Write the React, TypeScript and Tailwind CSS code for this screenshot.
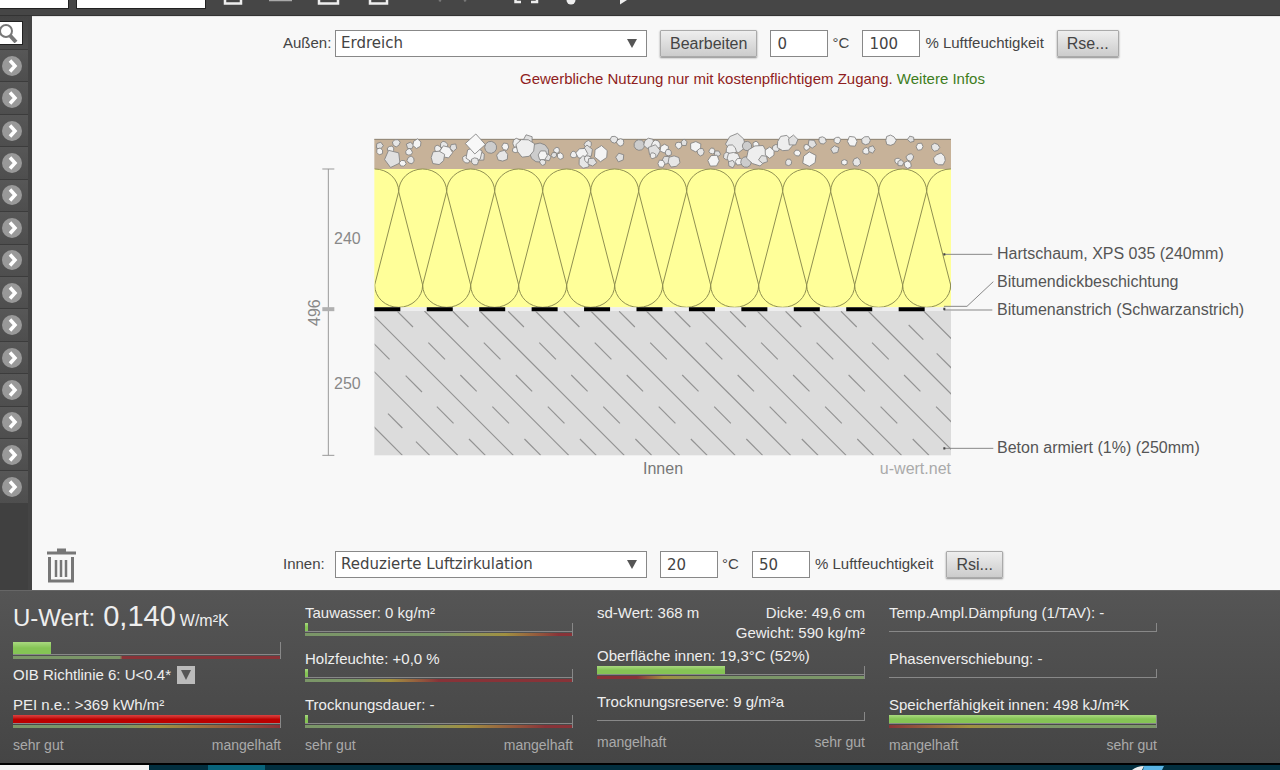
import React from "react";

type Stone = [x: number, y: number, r: number, shape?: "gem" | "grey"];

const STONES: Stone[] = [
  [239, 77, 10], [239, 94, 9], [289, 69, 10], [272, 88, 9], [277, 116, 23], [308, 130, 9], [332, 120, 10],
  [327, 96, 9], [330, 77, 10], [351, 71, 12], [432, 75, 10], [413, 86, 9], [460, 82, 10], [438, 96, 17],
  [413, 113, 19], [500, 117, 11], [540, 108, 14], [522, 104, 22], [525, 124, 10], [526, 72, 30, "gem"],
  [572, 82, 18, "grey"], [616, 80, 10], [607, 108, 15], [651, 69, 12], [684, 60, 14], [646, 90, 8],
  [718, 98, 29, "grey"], [676, 84, 25], [742, 112, 10], [728, 106, 13], [728, 127, 8], [770, 91, 8],
  [762, 105, 8], [781, 108, 9], [864, 73, 10], [821, 104, 9], [862, 94, 16], [845, 100, 15], [853, 126, 16],
  [863, 117, 9], [876, 126, 12], [903, 101, 20], [942, 59, 10], [961, 67, 10], [960, 112, 12],
  [1018, 75, 16, "grey"], [1047, 70, 14], [1068, 74, 12], [1062, 93, 17], [1093, 86, 12], [1105, 98, 9],
  [1059, 107, 8], [1099, 120, 12], [1084, 131, 10], [1122, 124, 16], [1136, 76, 9], [1152, 68, 9],
  [1187, 80, 15], [1202, 96, 10], [1236, 93, 8], [1252, 101, 9], [1241, 122, 16], [1308, 70, 26],
  [1293, 90, 14], [1341, 78, 14, "grey"], [1368, 74, 9], [1281, 108, 10], [1300, 115, 17], [1295, 132, 10],
  [1317, 125, 10], [1338, 126, 16, "grey"], [1372, 106, 28], [1390, 118, 12], [1409, 98, 14], [1428, 84, 10],
  [1454, 70, 21], [1479, 62, 14], [1492, 99, 9], [1466, 127, 9], [1520, 82, 8], [1536, 71, 12],
  [1528, 118, 19], [1567, 61, 10], [1612, 61, 9], [1605, 89, 11], [1657, 64, 14], [1698, 62, 12],
  [1698, 93, 9], [1715, 88, 10], [1633, 127, 8], [1670, 126, 11], [1772, 61, 14], [1833, 58, 9],
  [1859, 80, 10], [1906, 82, 11], [1793, 123, 8], [1802, 129, 9], [1823, 134, 10], [1830, 112, 10],
  [1919, 118, 16],
];

const SHADES = ["#e0e0e0", "#f4f4f4", "#e6e6e6", "#eeeeee"];

function stonePoints([x, y, r, shape]: Stone, i: number) {
  const corners = shape === "gem" ? 4 : shape === "grey" ? 11 : 5 + (i % 4);
  return Array.from({ length: corners }, (_, k) => {
    const wobble = shape ? 1 : 1.12 + 0.1 * Math.sin(i * 7 + k * 4);
    const a = (k / corners) * Math.PI * 2 + (shape === "gem" ? 0.05 : i * 1.7);
    return `${(x + Math.cos(a) * r * wobble).toFixed(1)},${(y + Math.sin(a) * r * wobble).toFixed(1)}`;
  }).join(" ");
}

const range = (from: number, to: number) => Array.from({ length: to - from + 1 }, (_, i) => from + i);

const PITCH = 166.4;
const DASH_ROWS = [
  { x: 292, y: 574, len: 47, from: 0, to: 8 },
  { x: 385, y: 668, len: 50, from: -1, to: 8 },
  { x: 481, y: 765, len: 49, from: 0, to: 8 },
  { x: 577, y: 860, len: 50, from: -1, to: 8 },
  { x: 507, y: 957, len: 49, from: 0, to: 8 },
];
const EXTRA_DASHES = [[1826, 615, 44], [1910, 700, 44], [317, 767, 49], [264, 881, 43], [348, 965, 41]];

const insulation = range(0, 12)
  .map((k) => {
    const x = 152 + k * 144;
    return `M${x} 215A72 68 0 0 1 ${x + 144} 215L${x + 72} 495A72 67 0 0 0 ${x + 216} 495L${x + 144} 215`;
  })
  .join("");

const LABELS = [
  { text: "Hartschaum, XPS 035 (240mm)", y: 139 },
  { text: "Bitumendickbeschichtung", y: 167 },
  { text: "Bitumenanstrich (Schwarzanstrich)", y: 195 },
  { text: "Beton armiert (1%) (250mm)", y: 333 },
];

function CrossSection() {
  return (
    <svg width="960" height="370" viewBox="0 0 960 370" role="img" aria-label="Bauteilquerschnitt" className="block shrink-0">
      <defs>
        <clipPath id="body"><rect x="224" y="0" width="1729" height="1006" /></clipPath>
        <clipPath id="slab"><rect x="224" y="573" width="1729" height="433" /></clipPath>
      </defs>
      <g transform="scale(0.33333)" strokeWidth="3" fill="none">
        <rect x="223" y="57" width="1730" height="90" fill="#c7b299" />
        <path d="M223 58H1953" stroke="#8d8474" />
        <g stroke="#808080" strokeWidth="2.5" strokeLinejoin="round">
          {STONES.map((s, i) => (
            <polygon
              key={i}
              points={stonePoints(s, i)}
              fill={s[3] === "gem" ? "#f8f8f8" : s[3] === "grey" ? "#cccccc" : SHADES[i % 4]}
            />
          ))}
        </g>
        <rect x="223" y="147" width="1730" height="415" fill="#ffff99" />
        <path d={insulation} clipPath="url(#body)" stroke="#8f8f50" />
        <rect x="223" y="573" width="1730" height="433" fill="#dcdcdc" />
        <rect x="223" y="562" width="1730" height="11" fill="#eeeeee" />
        <path d="M223 567.5H1880" stroke="#000" strokeWidth="12" strokeDasharray="78 79.3" />
        <g clipPath="url(#slab)" stroke="#929292" strokeWidth="3.5">
          {range(-2, 10).map((k) => {
            const c = 174 + k * PITCH - 540;
            return <path key={k} d={`M${c + 573} 573L${c + 1006} 1006`} />;
          })}
          {DASH_ROWS.map((r) =>
            range(r.from, r.to).map((k) => (
              <path key={`${r.y}-${k}`} d={`M${r.x + k * PITCH} ${r.y}l${r.len} ${r.len}`} />
            )),
          )}
          {EXTRA_DASHES.map(([x, y, l]) => (
            <path key={x} d={`M${x} ${y}l${l} ${l}`} />
          ))}
        </g>
        <path d="M85 147V1006M67 147H103M67 1006H103" stroke="#999" />
        <path d="M67 567.5H103" stroke="#b0b0b0" strokeWidth="12" />
        <path d="M1932 403H2077M1932 559H2001L2080 485M1932 570H2077M1932 985H2080" stroke="#888" />
        <path d="M1930 403h6M1930 567h6M1930 985h6" stroke="#444" strokeWidth="7" />
      </g>
      <g className="font-['Liberation_Sans',Arial,sans-serif] text-[16px]" fill="#555">
        {LABELS.map((l) => (
          <text key={l.y} x="697" y={l.y}>{l.text}</text>
        ))}
      </g>
      <g className="font-['Liberation_Sans',Arial,sans-serif] text-[16px]" fill="#888">
        <text x="34" y="124">240</text>
        <text x="34" y="269">250</text>
        <text transform="translate(20 206) rotate(-90)">496</text>
      </g>
      <g className="font-['Liberation_Sans',Arial,sans-serif] text-[16px]">
        <text x="343" y="354" fill="#777">Innen</text>
        <text x="651" y="354" textAnchor="end" fill="#aaa">u-wert.net</text>
      </g>
    </svg>
  );
}

function PushButton({ children }: { children: React.ReactNode }) {
  return (
    <button
      type="button"
      className="h-[27px] rounded-[1px] border border-[#aaa] bg-linear-to-b from-[#eee] to-[#ccc] px-[9px] text-base leading-6 text-[#444] shadow-[0_1px_2px_#888]"
    >
      {children}
    </button>
  );
}

type ClimateProps = {
  id: string;
  label: string;
  options: string[];
  temperature: string;
  humidity: string;
  edit?: boolean;
  resistance: string;
};

function ClimateRow({ id, label, options, temperature, humidity, edit, resistance }: ClimateProps) {
  const box = "h-[27px] w-[58px] border border-[#888] bg-white px-1.5 font-['DejaVu_Sans',Verdana,sans-serif] text-[15px] text-[#444]";
  return (
    <div className="flex items-center whitespace-nowrap text-[15px] text-[#444]">
      <label htmlFor={`${id}-env`} className="w-[52px]">{label}</label>
      <span className="relative mr-[13px]">
        <select
          id={`${id}-env`}
          className="block h-[27px] w-[312px] appearance-none border border-[#888] bg-white px-[5px] font-['DejaVu_Sans',Verdana,sans-serif] text-[15px] text-[#444]"
        >
          {options.map((o) => (
            <option key={o}>{o}</option>
          ))}
        </select>
        <svg width="10" height="9" viewBox="0 0 10 9" className="pointer-events-none absolute top-[9px] right-[10px]">
          <path d="M0 0H10L5 9Z" fill="#555" />
        </svg>
      </span>
      {edit && (
        <span className="mr-[13px] flex">
          <PushButton>Bearbeiten</PushButton>
        </span>
      )}
      <input id={`${id}-temp`} defaultValue={temperature} className={box} />
      <label htmlFor={`${id}-temp`} className="ml-1 w-[30px]">°C</label>
      <input id={`${id}-hum`} defaultValue={humidity} className={box} />
      <label htmlFor={`${id}-hum`} className="mr-[13px] ml-[5px]">% Luftfeuchtigkeit</label>
      <PushButton>{resistance}</PushButton>
    </div>
  );
}

type MeterProps = { fill?: string; scale?: string; tall?: boolean };

function Meter({ fill, scale, tall }: MeterProps) {
  return (
    <div className="w-full border-r border-[#888]">
      <div className={`border-b border-[#888] ${tall ? "h-[13px]" : "h-[9px]"}`}>
        {fill && <div className={`h-full ${fill}`} />}
      </div>
      {scale && <div className={`mt-px h-[3px] ${scale}`} />}
    </div>
  );
}

const GREEN = "bg-linear-to-b from-[#a9d97f] to-[#85c455] to-50%";

function Metric({ label, ...meter }: { label: string } & MeterProps) {
  return (
    <div className="h-[46px]">
      <p className="h-5 leading-5">{label}</p>
      <Meter {...meter} />
    </div>
  );
}

function Ends({ left, right }: { left: string; right: string }) {
  return (
    <div className="flex justify-between text-sm leading-5 text-[#aaa]">
      <span>{left}</span>
      <span>{right}</span>
    </div>
  );
}

function Results() {
  return (
    <section className="h-[173px] border-t border-[#666] bg-linear-to-b from-[#555] to-[#454545] pl-[13px] text-[15px] text-[#eee]">
      <div className="grid max-w-[1144px] grid-cols-4 gap-6 whitespace-nowrap">
        <div>
          <p className="flex h-[51px] items-baseline pt-[7px] leading-9">
            <span className="text-2xl leading-9">U-Wert:</span>
            <span className="ml-2 text-[29px] leading-9">0,140</span>
            <span className="ml-1 text-base leading-9">W/m²K</span>
          </p>
          <Meter tall fill={`w-[38px] ${GREEN}`} scale="bg-linear-to-r from-[#7b9668] from-40% to-[#883338] to-41%" />
          <p className="mt-1.5 flex h-5 items-center text-[15px]">
            OIB Richtlinie 6: U&lt;0.4*
            <button type="button" aria-label="Richtlinie wählen" className="ml-1.5 flex size-[18px] items-center justify-center bg-[#bbb]">
              <svg width="10" height="10" viewBox="0 0 10 10"><path d="M0 0H10L5 10Z" fill="#555" /></svg>
            </button>
          </p>
          <p className="mt-2.5 h-5 leading-5">PEI n.e.: &gt;369 kWh/m²</p>
          <Meter
            fill="w-full bg-linear-to-b from-[#dd4040] to-[#bb0000] to-50%"
            scale="bg-linear-to-r from-[#7b9668] from-40% via-[#a09040] via-55% to-[#883338]"
          />
          <div className="mt-[7px]"><Ends left="sehr gut" right="mangelhaft" /></div>
        </div>
        <div className="pt-3">
          <Metric label="Tauwasser: 0 kg/m²" fill={`w-[3px] ${GREEN}`} scale="bg-linear-to-r from-[#7b9668] from-50% via-[#a09040] via-75% to-[#883338] to-95%" />
          <Metric label="Holzfeuchte: +0,0 %" fill={`w-[3px] ${GREEN}`} scale="bg-linear-to-r from-[#7b9668] from-20% via-[#a09040] via-32% to-[#883338] to-50%" />
          <Metric label="Trocknungsdauer: -" fill={`w-[3px] ${GREEN}`} scale="bg-linear-to-r from-[#7b9668] from-40% via-[#a09040] via-60% to-[#883338] to-90%" />
          <div className="-mt-1.5"><Ends left="sehr gut" right="mangelhaft" /></div>
        </div>
        <div className="pt-3">
          <div className="flex h-[43px] justify-between leading-5">
            <p>sd-Wert: 368 m</p>
            <p className="text-right">Dicke: 49,6 cm<br />Gewicht: 590 kg/m²</p>
          </div>
          <Metric label="Oberfläche innen: 19,3°C (52%)" fill={`w-32 ${GREEN}`} scale="bg-linear-to-r from-[#883338] from-15% via-[#a09040] via-25% to-[#7b9668] to-45%" />
          <Metric label="Trocknungsreserve: 9 g/m²a" />
          <div className="-mt-1.5"><Ends left="mangelhaft" right="sehr gut" /></div>
        </div>
        <div className="pt-3">
          <Metric label="Temp.Ampl.Dämpfung (1/TAV): -" />
          <Metric label="Phasenverschiebung: -" />
          <Metric label="Speicherfähigkeit innen: 498 kJ/m²K" fill={`w-full ${GREEN}`} scale="bg-linear-to-r from-[#883338] via-[#a09040] via-30% to-[#7b9668] to-60%" />
          <div className="-mt-1.5"><Ends left="mangelhaft" right="sehr gut" /></div>
        </div>
      </div>
    </section>
  );
}

function Toolbar() {
  return (
    <header className="flex h-4 items-start border-b border-[#333] bg-[#464646]">
      <input aria-label="Projekt" className="mr-[7px] h-[9px] w-[69px] border border-t-0 border-l-0 border-[#222] bg-white" />
      <input aria-label="Bauteil" className="h-[9px] w-[130px] border border-t-0 border-[#222] bg-white" />
      <svg width="440" height="7" viewBox="0 0 440 7" className="ml-3.5" fill="none" stroke="#eee" strokeWidth="2.5">
        <path d="M5 0V3.500H21V0M99 0V3.500H118V0M150 0V3.500H167V0" />
        <path d="M49 0H72" stroke="#aaa" />
        <path d="M219 0l2 1M244 1l2-1" stroke="#777" />
        <path d="M295.500 0V2H301M311 2H317V0" />
        <circle cx="351" cy="0" r="4.500" fill="#eee" stroke="none" />
        <path d="M400 0V4.500L407 0Z" fill="#eee" stroke="none" />
      </svg>
    </header>
  );
}

function Sidebar() {
  return (
    <nav className="w-8 shrink-0 border-r-4 border-[#444] bg-[#404040]">
      <div className="h-[33px] bg-linear-to-b from-[#444] to-[#4c4c4c] pt-[5px]">
        <button type="button" aria-label="Suchen" className="flex h-6 w-[23px] items-center overflow-hidden border border-l-0 border-[#222] bg-white">
          <svg width="20" height="20" viewBox="0 0 20 20" className="shrink-0" fill="none" stroke="#777">
            <circle cx="6" cy="8" r="6" strokeWidth="2" />
            <path d="M10 12.500L16 19" strokeWidth="4" />
          </svg>
        </button>
      </div>
      <ul className="flex h-[454px] flex-col">
        {range(1, 14).map((n) => (
          <li key={n} className="flex flex-1 items-center border-t border-[#3c3c3c] bg-linear-to-b from-[#575757] to-[#4e4e4e] pl-0.5">
            <button type="button" aria-label={`Kategorie ${n}`}>
              <svg width="20" height="20" viewBox="0 0 20 20" className="block">
                <circle cx="10" cy="10" r="10" fill="#999" />
                <path d="M8 4.500L13 10L8 15.500" fill="none" stroke="#fff" strokeWidth="3.500" />
              </svg>
            </button>
          </li>
        ))}
      </ul>
    </nav>
  );
}

export default function App() {
  return (
    <div className="flex min-h-screen flex-col overflow-x-hidden bg-[#f8f8f8] font-['Liberation_Sans',Arial,sans-serif]">
      <Toolbar />
      <div className="flex flex-1">
        <Sidebar />
        <main className="flex min-w-0 flex-1 flex-col border-t border-[#e4e4e4]">
          <div className="pt-[13px] pl-[251px]">
            <ClimateRow id="aussen" label="Außen:" options={["Erdreich", "Außenluft"]} temperature="0" humidity="100" edit resistance="Rse..." />
          </div>
          <p className="mt-3 pl-[488px] text-[15px] leading-5 whitespace-nowrap text-[#8f1d21]">
            Gewerbliche Nutzung nur mit kostenpflichtigem Zugang.{" "}
            <a href="#infos" className="text-[#3e7d1c]">Weitere Infos</a>
          </p>
          <div className="mt-[31px] pl-[268px]">
            <CrossSection />
          </div>
          <div className="mt-auto flex items-start pb-1.5 pl-3.5">
            <button type="button" aria-label="Löschen" className="mr-[207px]">
              <svg width="30" height="36" viewBox="0 0 30 36" className="block" fill="none" stroke="#777">
                <path d="M1 5H30M11 2H20" strokeWidth="3" />
                <path d="M3.500 9V33H26.500V9" strokeWidth="3" />
                <path d="M10 12V29M15 12V29M20 12V29" strokeWidth="2.500" />
              </svg>
            </button>
            <div className="pt-[3px]">
              <ClimateRow id="innen" label="Innen:" options={["Reduzierte Luftzirkulation", "Wohnraum"]} temperature="20" humidity="50" resistance="Rsi..." />
            </div>
          </div>
        </main>
      </div>
      <Results />
      <footer className="flex h-[7px] items-stretch border-t-2 border-black bg-[#022f3f]">
        <div className="w-[149px] bg-[#f4f4f4]" />
        <div className="ml-[59px] w-[57px] bg-[#08637a]" />
        <svg width="36" height="5" viewBox="0 0 36 5" className="ml-[865px]">
          <path d="M2 5Q7 1 14 1L12 5Z" fill="#eee" />
          <path d="M14 1H34L32 5H13Z" fill="#5ab4e4" />
        </svg>
      </footer>
    </div>
  );
}
